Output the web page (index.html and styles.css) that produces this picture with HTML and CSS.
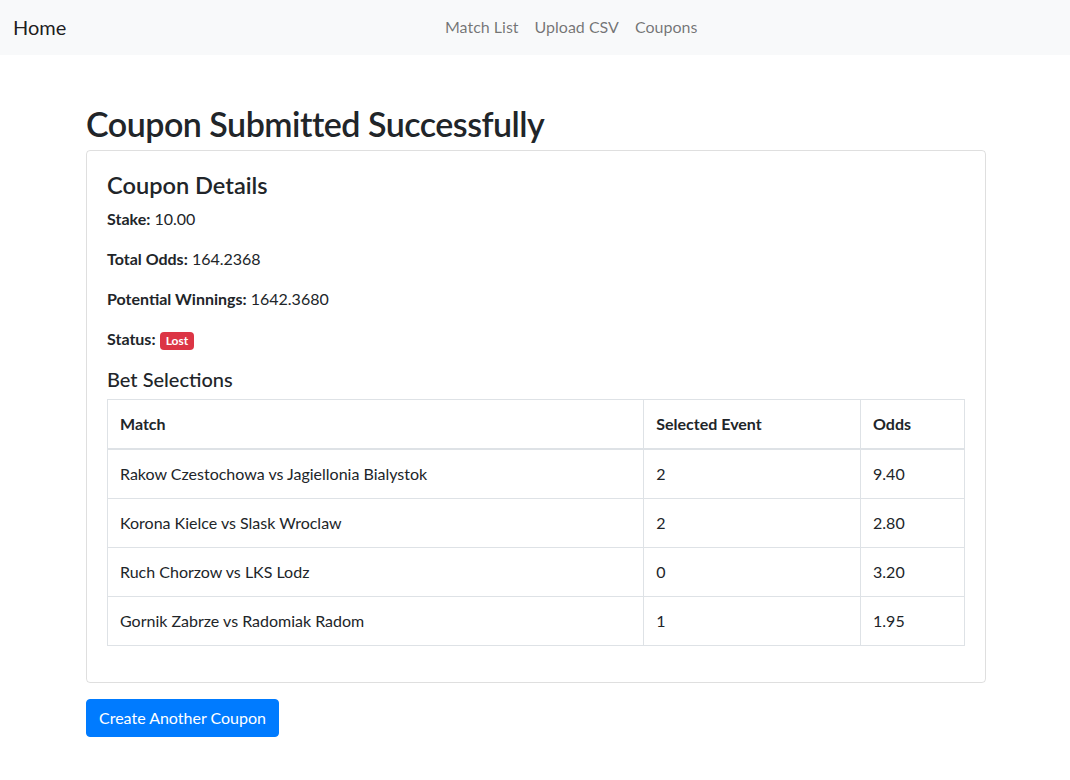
FILE: index.html
```html
<!DOCTYPE html>
<html lang="en">
<head>
<meta charset="utf-8">
<title>Coupon Submitted</title>
<link rel="stylesheet" href="styles.css">
</head>
<body>
<nav class="navbar">
  <a class="brand" href="#">Home</a>
  <ul class="nav">
    <li><a class="nav-link" href="#">Match List</a></li>
    <li><a class="nav-link" href="#">Upload CSV</a></li>
    <li><a class="nav-link" href="#">Coupons</a></li>
  </ul>
</nav>
<main class="container">
  <h1 class="title">Coupon Submitted Successfully</h1>
  <div class="card">
    <div class="card-body">
      <h4 class="card-title">Coupon Details</h4>
      <p><strong>Stake:</strong> 10.00</p>
      <p><strong>Total Odds:</strong> 164.2368</p>
      <p><strong>Potential Winnings:</strong> 1642.3680</p>
      <p><strong>Status:</strong> <span class="badge">Lost</span></p>
      <h5 class="sub-title">Bet Selections</h5>
      <table class="table">
        <thead>
          <tr><th class="col-match">Match</th><th class="col-event">Selected Event</th><th class="col-odds">Odds</th></tr>
        </thead>
        <tbody>
          <tr><td>Rakow Czestochowa vs Jagiellonia Bialystok</td><td>2</td><td>9.40</td></tr>
          <tr><td>Korona Kielce vs Slask Wroclaw</td><td>2</td><td>2.80</td></tr>
          <tr><td>Ruch Chorzow vs LKS Lodz</td><td>0</td><td>3.20</td></tr>
          <tr><td>Gornik Zabrze vs Radomiak Radom</td><td>1</td><td>1.95</td></tr>
        </tbody>
      </table>
    </div>
  </div>
  <a class="btn" href="#">Create Another Coupon</a>
</main>
</body>
</html>
```
FILE: styles.css
```css
* { box-sizing: border-box; }
html, body { margin: 0; padding: 0; }
body {
  font-family: Lato, "Noto Sans", sans-serif;
  font-size: 16px;
  line-height: 1.5;
  color: #212529;
  background: #fff;
}
a { text-decoration: none; }
.navbar {
  display: flex;
  align-items: center;
  height: 55px;
  padding: 0 16px 1px 13px;
  background: #f8f9fa;
}
.brand {
  font-size: 20px;
  line-height: 30px;
  color: rgba(0,0,0,.9);
  margin-right: 22px;
}
.nav {
  display: flex;
  list-style: none;
  margin: 0 auto;
  padding: 0;
}
.nav-link {
  display: block;
  padding: 8px 8px;
  color: rgba(0,0,0,.55);
}
.container {
  max-width: 902px;
  margin: 0 auto;
  padding: 0 0 0 2px;
}
.title {
  font-size: 34px;
  font-weight: 600;
  letter-spacing: -0.5px;
  line-height: 37px;
  margin: 0 0 8px;
  padding-top: 50px;
}
.card {
  border: 1px solid rgba(0,0,0,.125);
  border-radius: 4px;
}
.card-body { padding: 20px; }
.card-title {
  font-size: 23.6px;
  font-weight: 600;
  line-height: 28px;
  margin: 0 0 8px;
}
p { margin: 0 0 16px; }
strong { font-weight: 700; }
.badge {
  display: inline-block;
  padding: 3px 6px;
  font-size: 12px;
  font-weight: 700;
  line-height: 1;
  color: #fff;
  background: #dc3545;
  border-radius: 4px;
  vertical-align: baseline;
}
.sub-title {
  font-size: 20px;
  font-weight: 500;
  line-height: 24px;
  margin: 0 0 8px;
}
.table {
  width: 100%;
  border-collapse: collapse;
  margin-bottom: 16px;
}
.table th, .table td {
  border: 1px solid #dee2e6;
  padding: 12px;
  line-height: 24px;
  text-align: left;
  vertical-align: top;
}
.table thead th { border-bottom-width: 2px; font-weight: 700; }
.col-match { width: 537px; }
.col-event { width: 217px; }
.col-odds { width: 104px; }
.btn {
  display: inline-block;
  margin-top: 16px;
  padding: 6px 12px;
  line-height: 24px;
  font-size: 16px;
  color: #fff;
  background: #007bff;
  border: 1px solid #007bff;
  border-radius: 4px;
}
```
